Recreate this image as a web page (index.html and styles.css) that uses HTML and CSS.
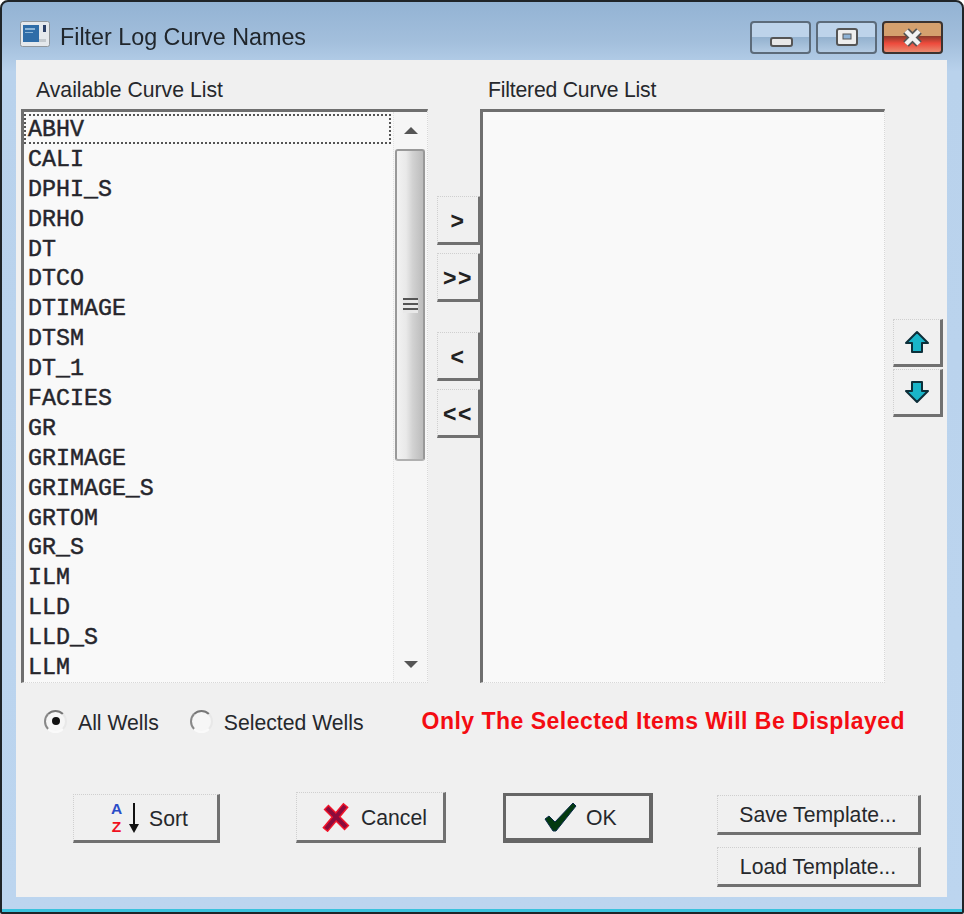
FILE: index.html
```html
<!DOCTYPE html>
<html lang="en">
<head>
<meta charset="utf-8">
<title>Filter Log Curve Names</title>
<link rel="stylesheet" href="styles.css">
</head>
<body>
<div class="window">
  <header class="titlebar">
    <svg class="app-icon" width="30" height="26" viewBox="0 0 30 26">
      <rect x="0.5" y="0.5" width="29" height="25" rx="2" fill="#e4e8ec" stroke="#8f969c"/>
      <rect x="3" y="4" width="16" height="17" fill="#2f6da8"/>
      <rect x="5" y="7" width="10" height="2" fill="#8db6d8"/>
      <rect x="5" y="11" width="8" height="1" fill="#8db6d8"/>
      <rect x="23" y="4" width="3" height="7" fill="#2b3f66"/>
      <rect x="19" y="18" width="7" height="3" fill="#c3c9ce"/>
    </svg>
    <h1 class="title">Filter Log Curve Names</h1>
    <div class="controls">
      <div class="ctl">
        <svg width="57" height="29" viewBox="0 0 57 29"><rect x="19" y="15" width="21" height="8" rx="2" fill="#e8e8e8" stroke="#555" stroke-width="2"/></svg>
      </div>
      <div class="ctl">
        <svg width="57" height="29" viewBox="0 0 57 29"><rect x="19" y="6" width="20" height="16" rx="2" fill="#eee" stroke="#555" stroke-width="2"/><rect x="25" y="11" width="8" height="5" fill="#8fb3d6" stroke="#555"/></svg>
      </div>
      <div class="ctl ctl-close">
        <svg width="57" height="29" viewBox="0 0 57 29"><path d="M22 8 L35 21 M35 8 L22 21" stroke="#555" stroke-width="8"/><path d="M22 8 L35 21 M35 8 L22 21" stroke="#f2f2f2" stroke-width="4.5"/></svg>
      </div>
    </div>
  </header>
  <main class="client">
    <section class="lists">
      <div class="label label-left">Available Curve List</div>
      <div></div>
      <div class="label label-right">Filtered Curve List</div>
      <div></div>

      <div class="listbox">
        <ul class="items">
          <li class="item item-focus">ABHV</li>
          <li class="item">CALI</li>
          <li class="item">DPHI_S</li>
          <li class="item">DRHO</li>
          <li class="item">DT</li>
          <li class="item">DTCO</li>
          <li class="item">DTIMAGE</li>
          <li class="item">DTSM</li>
          <li class="item">DT_1</li>
          <li class="item">FACIES</li>
          <li class="item">GR</li>
          <li class="item">GRIMAGE</li>
          <li class="item">GRIMAGE_S</li>
          <li class="item">GRTOM</li>
          <li class="item">GR_S</li>
          <li class="item">ILM</li>
          <li class="item">LLD</li>
          <li class="item">LLD_S</li>
          <li class="item">LLM</li>
        </ul>
        <div class="scrollbar">
          <div class="arrow-box"><span class="tri-up"></span></div>
          <div class="track">
            <div class="thumb"><span class="grip"></span></div>
          </div>
          <div class="arrow-box arrow-box-down"><span class="tri-down"></span></div>
        </div>
      </div>

      <div class="movers">
        <button class="btn mover">&gt;</button>
        <button class="btn mover">&gt;&gt;</button>
        <button class="btn mover mover-gap">&lt;</button>
        <button class="btn mover">&lt;&lt;</button>
      </div>

      <div class="listbox"></div>

      <div class="updown">
        <button class="btn updown-btn">
          <svg width="26" height="24" viewBox="0 0 26 24"><path d="M13 2 L24 13 L18 13 L18 22 L8 22 L8 13 L2 13 Z" fill="#19b5c9" stroke="#0d2f3a" stroke-width="2" stroke-linejoin="round"/></svg>
        </button>
        <button class="btn updown-btn">
          <svg width="26" height="24" viewBox="0 0 26 24"><path d="M13 22 L24 11 L18 11 L18 2 L8 2 L8 11 L2 11 Z" fill="#19b5c9" stroke="#0d2f3a" stroke-width="2" stroke-linejoin="round"/></svg>
        </button>
      </div>
    </section>

    <section class="options">
      <label class="radio-row">
        <span class="radio radio-on"></span>
        <span class="radio-text">All Wells</span>
      </label>
      <label class="radio-row radio-row-2">
        <span class="radio"></span>
        <span class="radio-text">Selected Wells</span>
      </label>
      <div class="notice">Only The Selected Items Will Be Displayed</div>
    </section>

    <section class="actions">
      <button class="btn action action-sort">
        <span class="az"><span class="az-a">A</span><span class="az-z">Z</span></span>
        <svg class="sort-arrow" width="12" height="32" viewBox="0 0 12 32"><path d="M6 1 V24" stroke="#111" stroke-width="2"/><path d="M1 22 H11 L6 31 Z" fill="#111"/></svg>
        <span class="btn-text">Sort</span>
      </button>
      <button class="btn action action-cancel">
        <svg width="28" height="30" viewBox="0 0 28 30"><path d="M3 28 L24 3 M4 5 L25 26" stroke="#f0142a" stroke-width="7"/><path d="M4 27 L23 4 M5 6 L24 25" stroke="#8c0b3c" stroke-width="4"/></svg>
        <span class="btn-text">Cancel</span>
      </button>
      <button class="btn action action-ok">
        <svg width="34" height="30" viewBox="0 0 34 30"><path d="M2 17 L6 14 L12 20 L30 1 L33 4 L13 29 L10 29 Z" fill="#033a10" stroke="#0b2a4a" stroke-width="1"/></svg>
        <span class="btn-text">OK</span>
      </button>
      <div class="templates">
        <button class="btn template">Save Template...</button>
        <button class="btn template template-load">Load Template...</button>
      </div>
    </section>
  </main>
</div>
</body>
</html>
```
FILE: styles.css
```css
* { box-sizing: border-box; }
html, body { margin: 0; padding: 0; background: #fff; }
body {
  width: 964px;
  height: 914px;
  font-family: "Liberation Sans", Arial, sans-serif;
  color: #26282c;
  overflow: hidden;
}
.window {
  width: 964px;
  height: 914px;
  border: 2px solid #1f2428;
  border-radius: 8px 8px 2px 2px;
  padding: 0 15px 0 14px;
  background: linear-gradient(180deg, #93b3d4 0, #a3bfdc 40px, #b9d2ec 70px, #bcd5ef 100%);
  box-shadow: inset 0 -3px 0 #39c2dc;
  display: flex;
  flex-direction: column;
  filter: blur(0.5px);
}
.titlebar {
  height: 58px;
  display: flex;
  align-items: center;
  flex: none;
  padding-left: 4px;
}
.app-icon { flex: none; margin-top: 6px; }
.title {
  margin: 12px 0 0 10px;
  font-size: 23.3px;
  font-weight: 400;
  color: #20262c;
  flex: 1;
}
.controls {
  display: flex;
  gap: 5px;
  margin-right: 4px;
  margin-top: 12px;
}
.ctl {
  width: 61px;
  height: 33px;
  border: 2px solid #5c6b7a;
  border-radius: 4px;
  background: linear-gradient(180deg, #bdd3ea 0, #bdd3ea 50%, #94b2cf 50%, #b3cbe3 100%);
  display: flex;
  align-items: center;
  justify-content: center;
}
.ctl svg { flex: none; }
.ctl-close {
  border-color: #3b3330;
  background: linear-gradient(180deg, #d4a06e 0, #d4a06e 45%, #8b3a2a 45%, #ee4a3c 70%, #e88a70 100%);
}
.client {
  width: 931px;
  height: 837px;
  background: #f0f0f0;
  padding: 17px 0 0 5px;
  flex: none;
}
.lists {
  display: grid;
  grid-template-columns: 407px 52px 405px 58px;
  grid-template-rows: 32px 574px;
}
.label { font-size: 21.2px; line-height: 26px; }
.label-left { padding-left: 15px; }
.label-right { padding-left: 8px; letter-spacing: -0.2px; }
.listbox {
  display: flex;
  background: #f9f9f9;
  border-top: 3px solid #6f6f6f;
  border-left: 3px solid #6f6f6f;
  border-right: 1px dotted #d8d8d8;
  border-bottom: 1px dotted #d8d8d8;
}
.items {
  list-style: none;
  margin: 0;
  padding: 2px 0 0;
  flex: 1;
  min-width: 0;
}
.item {
  height: 29.9px;
  line-height: 33px;
  padding-left: 4px;
  font-family: "Liberation Mono", "Courier New", monospace;
  font-weight: 400;
  font-size: 23.3px;
  -webkit-text-stroke: 0.45px #26262c;
  color: #26262c;
}
.item-focus {
  outline: 2px dotted #555;
  outline-offset: -2px;
  margin-right: 2px;
}
.scrollbar {
  width: 34px;
  flex: none;
  display: flex;
  flex-direction: column;
  background: #f6f6f6;
  border-left: 1px dotted #e2e2e2;
}
.arrow-box {
  height: 36px;
  flex: none;
  display: flex;
  align-items: center;
  justify-content: center;
}
.arrow-box-down { margin-top: auto; }
.tri-up, .tri-down {
  width: 0;
  height: 0;
  border-left: 7px solid transparent;
  border-right: 7px solid transparent;
}
.tri-up { border-bottom: 7px solid #555; }
.tri-down { border-top: 7px solid #555; }
.track { padding: 1px 0 0 1px; }
.thumb {
  width: 30px;
  height: 312px;
  border: 2px solid #999;
  border-bottom-color: #b0b0b0;
  border-radius: 3px;
  background: linear-gradient(90deg, #f2f2f2 0, #e9e9e9 35%, #d2d2d2 60%, #bcbcbc 100%);
  display: flex;
  align-items: center;
  justify-content: center;
}
.grip {
  width: 15px;
  height: 15px;
  background: repeating-linear-gradient(180deg, #555 0, #555 2px, #e8e8e8 2px, #e8e8e8 5px);
}
.btn {
  font-family: inherit;
  font-size: inherit;
  color: inherit;
  background: #f0f0f0;
  border-style: dotted solid solid dotted;
  border-width: 1px 3px 3px 1px;
  border-color: #cfcfcf #707070 #707070 #cfcfcf;
  padding: 0;
  margin: 0;
  display: flex;
  align-items: center;
  justify-content: center;
}
.btn-text { padding-top: 2px; }
.movers {
  display: flex;
  flex-direction: column;
  gap: 8px;
  padding: 87px 0 0 9px;
}
.mover {
  width: 44px;
  height: 49px;
  padding-top: 3px;
  font-size: 23px;
  font-weight: 700;
  letter-spacing: 1.5px;
  color: #222;
}
.mover-gap { margin-top: 22px; }
.updown {
  display: flex;
  flex-direction: column;
  gap: 2px;
  padding: 210px 0 0 8px;
}
.updown-btn { width: 50px; height: 48px; }
.options {
  display: flex;
  align-items: center;
  height: 36px;
  margin-top: 20px;
  font-size: 21.2px;
}
.radio-row {
  display: flex;
  align-items: center;
  margin-left: 23px;
  gap: 11px;
}
.radio-row-2 { margin-left: 31px; }
.radio-text { white-space: nowrap; padding-top: 3px; }
.radio {
  width: 23px;
  height: 23px;
  border-radius: 50%;
  border: 2px solid;
  border-color: #777 #e8e8e8 #fafafa #888;
  background: #f6f6f6;
  flex: none;
  display: flex;
  align-items: center;
  justify-content: center;
}
.radio-on::after {
  content: "";
  width: 8px;
  height: 8px;
  border-radius: 50%;
  background: #111;
}
.notice {
  margin-left: 58px;
  color: #f40c12;
  font-weight: 700;
  font-size: 23px;
  letter-spacing: 0.48px;
  white-space: nowrap;
}
.actions {
  display: flex;
  align-items: flex-start;
  margin-top: 53px;
  font-size: 21.2px;
}
.action { justify-content: flex-start; }
.action-sort { width: 147px; height: 49px; margin: 2px 0 0 52px; padding-left: 35px; }
.action-cancel { width: 150px; height: 51px; margin-left: 76px; padding-left: 25px; gap: 11px; }
.action-ok {
  width: 150px;
  height: 50px;
  margin: 1px 0 0 57px;
  padding-left: 37px;
  gap: 9px;
  border: 3px solid #666;
  border-right-width: 4px;
  border-bottom-width: 5px;
}
.az {
  display: flex;
  flex-direction: column;
  align-items: center;
  width: 15px;
  margin-right: 4px;
  font-weight: 700;
  line-height: 18px;
  font-size: 15.5px;
}
.az-a { color: #2a4cc8; }
.az-z { color: #f01020; }
.sort-arrow { margin-right: 9px; flex: none; }
.templates {
  display: flex;
  flex-direction: column;
  gap: 12px;
  margin: 3px 0 0 64px;
}
.template { width: 204px; height: 40px; white-space: nowrap; padding-top: 1px; }
.template-load { padding-top: 2px; }
```
